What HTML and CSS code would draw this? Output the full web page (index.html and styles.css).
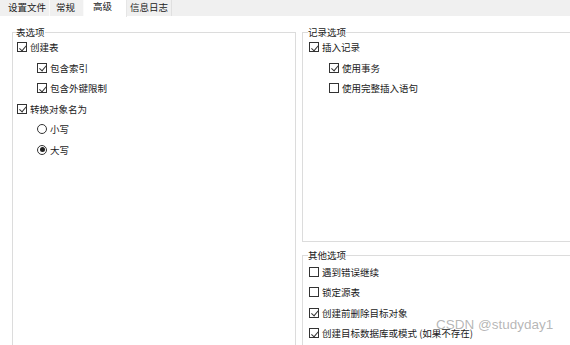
FILE: index.html
```html
<!DOCTYPE html>
<html lang="zh-CN">
<head>
    <meta charset="UTF-8">
    <title>高级</title>
    <link rel="stylesheet" href="styles.css">
</head>
<body>
    <div class="tabs">
        <div class="tab tab-first">设置文件</div>
        <div class="tab tab-second">常规</div>
        <div class="tab tab-active">高级</div>
        <div class="tab tab-last">信息日志</div>
    </div>

    <div class="content">
        <fieldset class="group group-left">
            <legend>表选项</legend>
            <div class="rows">
                <div class="row"><span class="box checked"></span>创建表</div>
                <div class="row sub"><span class="box checked"></span>包含索引</div>
                <div class="row sub"><span class="box checked"></span>包含外键限制</div>
                <div class="row"><span class="box checked"></span>转换对象名为</div>
                <div class="row sub"><span class="radio"></span>小写</div>
                <div class="row sub"><span class="radio selected"></span>大写</div>
            </div>
        </fieldset>

        <div class="column">
            <fieldset class="group group-records">
                <legend>记录选项</legend>
                <div class="rows">
                    <div class="row"><span class="box checked"></span>插入记录</div>
                    <div class="row sub"><span class="box checked"></span>使用事务</div>
                    <div class="row sub"><span class="box"></span>使用完整插入语句</div>
                </div>
            </fieldset>

            <fieldset class="group group-other">
                <legend>其他选项</legend>
                <div class="rows rows-other">
                    <div class="row"><span class="box"></span>遇到错误继续</div>
                    <div class="row"><span class="box"></span>锁定源表</div>
                    <div class="row"><span class="box checked"></span>创建前删除目标对象</div>
                    <div class="row"><span class="box checked"></span>创建目标数据库或模式 (如果不存在)</div>
                </div>
            </fieldset>
        </div>
    </div>

    <div class="watermark">CSDN @studyday1</div>
</body>
</html>
```

FILE: styles.css
```css
body {
    margin: 0;
    width: 570px;
    height: 345px;
    overflow: hidden;
    background: #fff;
    font-family: "Noto Sans CJK SC", "Noto Sans", sans-serif;
    font-size: 9.5px;
    color: #1a1a1a;
    position: relative;
}
.tabs {
    display: flex;
    height: 16px;
    background: #f0f0f0;
}
.tab {
    height: 16px;
    line-height: 15px;
    padding: 0 3px;
    border-right: 1px solid #fafafa;
    box-sizing: border-box;
    white-space: nowrap;
    color: #222;
}
.tab-first {
    padding-left: 8px;
    padding-right: 3px;
}
.tab-second {
    padding-left: 6px;
    padding-right: 8px;
}
.tab-active {
    background: #fff;
    width: 43px;
    height: 17px;
    line-height: 12px;
    padding: 0 0 0 9px;
    border-right: 1px solid #e6e6e6;
}
.tab-last {
    padding: 0 3px 0 3px;
    border-right: 1px solid #e0e0e0;
}
.content {
    display: flex;
    gap: 6px;
    padding: 10px 0 0 12px;
}
.group {
    margin: 0;
    padding: 0 0 0 4px;
    border: 1px solid #dcdcdc;
    box-sizing: border-box;
    min-width: 0;
}
.group legend {
    padding: 0;
    margin-left: -1px;
    line-height: 12px;
    color: #222;
}
.group-left {
    width: 284px;
    height: 325px;
}
.column {
    display: flex;
    flex-direction: column;
    flex: 1;
}
.group-records {
    height: 216px;
    margin-right: -10px;
    padding-left: 6px;
}
.group-other {
    margin-top: 7px;
    height: 100px;
    margin-right: -10px;
    padding-left: 6px;
}
.rows {
    margin-top: -1px;
}
.rows-other {
    margin-top: 0.5px;
}
.row {
    display: flex;
    align-items: center;
    height: 20.5px;
    white-space: nowrap;
}
.row.sub {
    padding-left: 20px;
}
.box {
    width: 10px;
    height: 10px;
    border: 1px solid #333;
    box-sizing: border-box;
    margin-right: 3px;
    position: relative;
    flex: none;
}
.box.checked::after {
    content: "";
    position: absolute;
    left: 2.5px;
    top: 0.5px;
    width: 3px;
    height: 5.5px;
    border-right: 1px solid #333;
    border-bottom: 1px solid #333;
    transform: rotate(40deg);
}
.radio {
    width: 10px;
    height: 10px;
    border: 1px solid #333;
    border-radius: 50%;
    box-sizing: border-box;
    margin-right: 3px;
    position: relative;
    flex: none;
}
.radio.selected::after {
    content: "";
    position: absolute;
    left: 1.5px;
    top: 1.5px;
    width: 5px;
    height: 5px;
    border-radius: 50%;
    background: #222;
}
.watermark {
    position: absolute;
    left: 436px;
    top: 317px;
    font-family: "Liberation Sans", Arial, sans-serif;
    font-size: 13.5px;
    color: rgba(120, 120, 120, 0.55);
    white-space: nowrap;
}
```
